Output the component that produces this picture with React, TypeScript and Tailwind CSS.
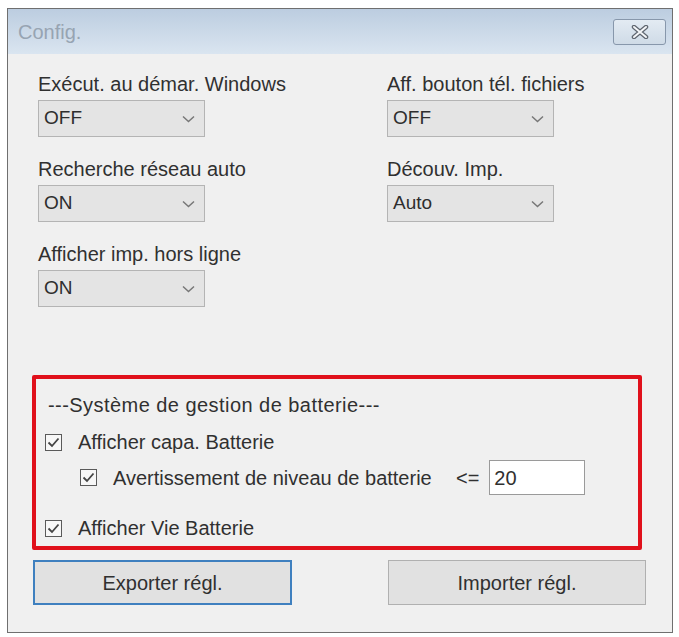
import React from 'react';

function Dropdown({ value }: { value: string }) {
  return (
    <div className="mt-[4px] flex h-[37px] w-[167px] items-center justify-between border border-[#b4b4b4] bg-[#e4e4e4] pl-[5px] pr-[9px] text-[19px] text-[#2e2e2e]">
      <span>{value}</span>
      <svg width="13" height="8" viewBox="0 0 13 8">
        <path d="M1 1.5 L6.5 6.5 L12 1.5" fill="none" stroke="#777" strokeWidth="1.5" />
      </svg>
    </div>
  );
}

function Field({ label, value }: { label: string; value: string }) {
  return (
    <div className="flex flex-col">
      <div className="h-[24px] leading-[24px]">{label}</div>
      <Dropdown value={value} />
    </div>
  );
}

function Check() {
  return (
    <svg width="17" height="17" viewBox="0 0 17 17" className="shrink-0">
      <rect x="0.5" y="0.5" width="16" height="16" fill="#f7f7f7" stroke="#5a5a5a" />
      <path d="M3.5 8.5 L7 12 L13.5 4.5" fill="none" stroke="#444" strokeWidth="1.8" />
    </svg>
  );
}

export default function App() {
  return (
    <div className="min-h-screen bg-white pl-[7px] pt-[8px] font-['Liberation_Sans',Arial,sans-serif] text-[20px] text-[#303030]">
      <div className="flex h-[625px] w-[666px] flex-col border border-[#6f6f6f] bg-[#f0f0f0]">
        {/* Title bar */}
        <div className="flex h-[45px] items-center justify-between bg-gradient-to-b from-[#bccde0] to-[#dae5f0] pl-[10px] pr-[6px]">
          <span className="text-[#97a4b2]">Config.</span>
          <div className="flex h-[26px] w-[53px] items-center justify-center rounded-[3px] border border-[#8797ab] bg-gradient-to-b from-[#e3ebf3] to-[#cfdbe7]">
            <svg width="18" height="14" viewBox="0 0 18 14">
              <path d="M3 2 L15 12 M15 2 L3 12" stroke="#5f6670" strokeWidth="4.5" strokeLinecap="round" />
              <path d="M3 2 L15 12 M15 2 L3 12" stroke="#f4f6f8" strokeWidth="2" strokeLinecap="round" />
            </svg>
          </div>
        </div>

        {/* Client area */}
        <div className="flex flex-1 flex-col px-[24px] pt-[18px]">
          <div className="grid grid-cols-[349px_1fr] pl-[6px]">
            <div className="flex flex-col gap-[20px]">
              <Field label="Exécut. au démar. Windows" value="OFF" />
              <Field label="Recherche réseau auto" value="ON" />
              <Field label="Afficher imp. hors ligne" value="ON" />
            </div>
            <div className="flex flex-col gap-[20px]">
              <Field label="Aff. bouton tél. fichiers" value="OFF" />
              <Field label="Découv. Imp." value="Auto" />
            </div>
          </div>

          {/* Battery section */}
          <div className="mt-[68px] w-[610px] rounded-[2px] border-[4px] border-[#e0101b] pb-[6px] pl-[9px] pt-[14px]">
            <div className="ml-[3px] h-[24px] leading-[24px] tracking-[0.45px]">---Système de gestion de batterie---</div>
            <div className="mt-[13px] flex h-[24px] items-center gap-[16px]">
              <Check />
              <span>Afficher capa. Batterie</span>
            </div>
            <div className="mt-[6px] flex h-[35px] items-center pl-[35px]">
              <Check />
              <span className="ml-[16px] w-[343px]">Avertissement de niveau de batterie</span>
              <span>&lt;=</span>
              <div className="ml-[10px] flex h-[35px] w-[96px] items-center border border-[#9a9a9a] bg-white pl-[4px]">20</div>
            </div>
            <div className="mt-[21px] flex h-[24px] items-center gap-[16px]">
              <Check />
              <span>Afficher Vie Batterie</span>
            </div>
          </div>

          {/* Buttons */}
          <div className="mt-[10px] flex">
            <button className="ml-[1px] h-[45px] w-[259px] border-2 border-[#3f80bf] bg-[#e1e1e1] text-[#303030]">
              Exporter régl.
            </button>
            <button className="ml-[96px] h-[45px] w-[258px] border border-[#b0b0b0] bg-[#e1e1e1] text-[#303030]">
              Importer régl.
            </button>
          </div>
        </div>
      </div>
    </div>
  );
}
